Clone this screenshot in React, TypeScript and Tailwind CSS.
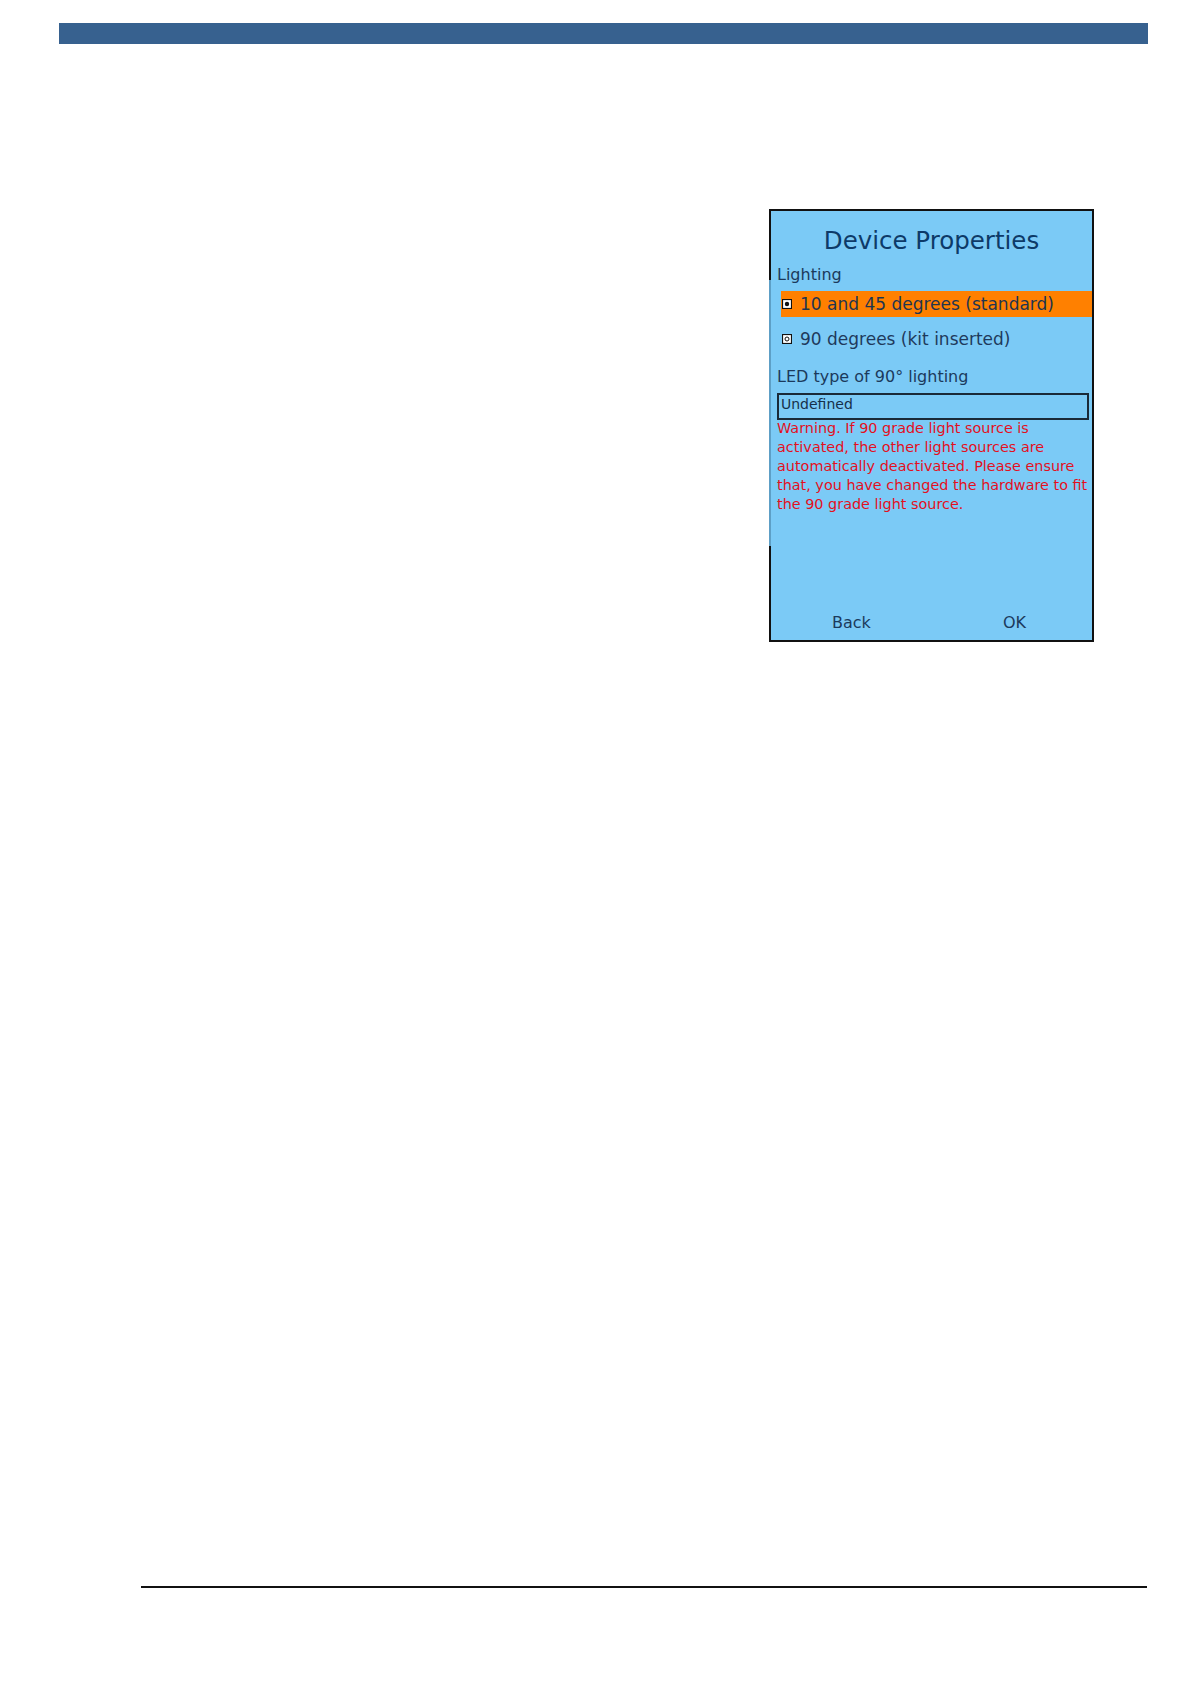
import React from 'react'

const font = { fontFamily: '"DejaVu Sans", "Noto Sans", sans-serif' }

function RadioIcon({ checked }: { checked: boolean }) {
  return (
    <svg width="10" height="10" viewBox="0 0 10 10" className="shrink-0">
      <rect x="0.5" y="0.5" width="9" height="9" fill="#ffffff" stroke="#111111" strokeWidth="1.2" />
      {checked ? (
        <circle cx="5" cy="5" r="2.2" fill="#111111" />
      ) : (
        <circle cx="5" cy="5" r="2" fill="#ffffff" stroke="#111111" strokeWidth="1" />
      )}
    </svg>
  )
}

const warningLines = [
  'Warning. If 90 grade light source is',
  'activated, the other light sources are',
  'automatically deactivated. Please ensure',
  'that, you have changed the hardware to fit',
  'the 90 grade light source.',
]

function DeviceProperties() {
  return (
    <div className="ml-[769px] mt-[165px] flex h-[433px] w-[325px]" style={font}>
      {/* left edge, partly faded like in the capture */}
      <div className="flex w-[2px] flex-col">
        <div className="h-[71px] bg-[#111111]" />
        <div className="flex-1 bg-[#5d9fc6]" />
        <div className="h-[96px] bg-[#111111]" />
      </div>

      <div className="flex flex-1 flex-col border-y-2 border-r-2 border-[#111111] bg-[#7bcaf6]">
        <div className="mt-[17px] h-[26px] text-center text-[24.5px] leading-[26px] text-[#0d3a68]">
          Device Properties
        </div>

        <div className="mt-[11px] pl-[6px] text-[16px] leading-[20px] text-[#1b3a5c]">Lighting</div>

        <div className="ml-[10px] mt-[6px] flex h-[26px] items-center gap-[8px] bg-[#ff8000] pl-[1px] text-[17px] leading-[26px] text-[#1f3550]">
          <RadioIcon checked />
          <span>10 and 45 degrees (standard)</span>
        </div>

        <div className="ml-[10px] mt-[9px] flex h-[26px] items-center gap-[8px] pl-[1px] text-[17px] leading-[26px] text-[#1f3a5c]">
          <RadioIcon checked={false} />
          <span>90 degrees (kit inserted)</span>
        </div>

        <div className="mt-[15px] pl-[6px] text-[16px] leading-[20px] text-[#1b3a5c]">LED type of 90° lighting</div>

        <div className="ml-[6px] mt-[6px] h-[27px] w-[312px] border-2 border-[#1a2a38] pl-[2px] pt-[1px] text-[14px] leading-[16px] text-[#16304a]">
          Undefined
        </div>

        <div className="mt-[-1px] pl-[6px] text-[14.4px] leading-[19px] text-[#e3101e]">
          {warningLines.map((line) => (
            <div key={line} className="whitespace-nowrap">{line}</div>
          ))}
        </div>

        <div className="mt-auto flex pb-[7px] pl-[61px] pr-[66px] text-[16px] leading-[20px] text-[#1b3a5c]">
          <span>Back</span>
          <span className="ml-auto">OK</span>
        </div>
      </div>
    </div>
  )
}

export default function App() {
  return (
    <div className="relative h-[1684px] w-[1190px] overflow-hidden bg-white pt-[23px]">
      <div className="ml-[59px] h-[21px] w-[1089px] bg-[#37618f]" />

      <DeviceProperties />

      <div className="ml-[141px] mt-[944px] h-[2px] w-[1006px] bg-[#111111]" />
    </div>
  )
}
